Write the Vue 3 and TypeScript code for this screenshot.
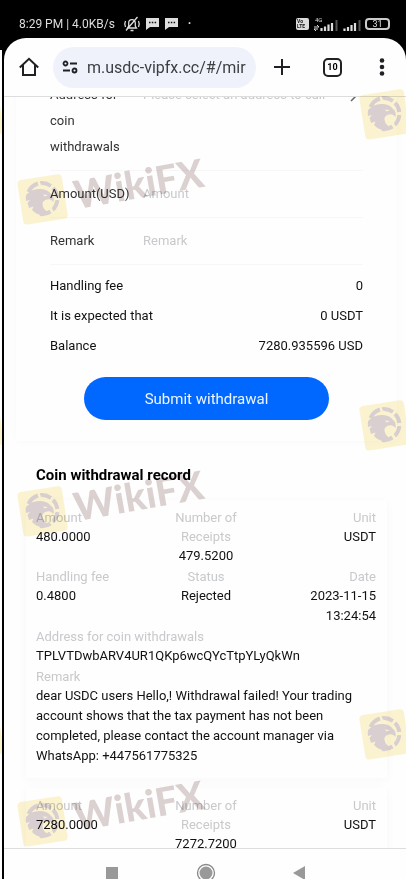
<script setup lang="ts">
import { ref } from 'vue'

interface Entry {
  amount: string
  receipts: string
  unit: string
  fee?: string
  status?: string
  date?: string
  address?: string
  remark?: string
}

const amount = ref('')
const remark = ref('')
const address = ref('')

const summary = [
  { label: 'Handling fee', value: '0' },
  { label: 'It is expected that', value: '0 USDT' },
  { label: 'Balance', value: '7280.935596 USD' },
]

const records: Entry[] = [
  {
    amount: '480.0000',
    receipts: '479.5200',
    unit: 'USDT',
    fee: '0.4800',
    status: 'Rejected',
    date: '2023-11-15 13:24:54',
    address: 'TPLVTDwbARV4UR1QKp6wcQYcTtpYLyQkWn',
    remark:
      'dear USDC users Hello,! Withdrawal failed! Your trading account shows that the tax payment has not been completed, please contact the account manager via WhatsApp: +447561775325',
  },
  { amount: '7280.0000', receipts: '7272.7200', unit: 'USDT' },
]

const wideMarks = ['first', 'second', 'third']
const edgeMarks = ['upper', 'middle', 'lower']
</script>

<template>
  <div class="device">
    <svg class="defs" width="0" height="0" aria-hidden="true">
      <symbol id="eagle" viewBox="0 0 52 52">
        <rect x="4" y="4" width="45" height="45" rx="4" fill="#f8e48c" transform="rotate(-9 26 26)" />
        <g fill="none" stroke="#a28a8c" stroke-width="4">
          <path d="M12.500 19A15.500 15.500 0 0 1 22 10.500" />
          <path d="M24 10.200A15.500 15.500 0 0 1 35 13" />
          <path d="M37 14.800A15.500 15.500 0 0 1 41.300 24" />
          <path d="M41.300 27A15.500 15.500 0 0 1 36.500 37" />
          <path d="M34.500 38.500A15.500 15.500 0 0 1 24 41" />
        </g>
        <path
          d="M10 22Q16 15 25 16Q32 16.500 35 21Q38.500 23 37.500 29Q35 25.500 31 26.500Q27.500 27 26.500 30Q26 35 31 38.500L27 42.500Q20 41.500 16 37L17.500 33.500L13 35L11.500 30L14 27L10 28Q9.500 25 10 22Z"
          fill="#a28a8c"
        />
        <path d="M27 21.500L32 22L28.500 23.500Z" fill="#f8e48c" />
        <path d="M22 8L26 13M36 12L34 18M43 25L39 27M37 39L35 34" stroke="#f8e48c" stroke-width="1" />
      </symbol>
    </svg>

    <div class="edge"></div>
    <div class="screen">
      <header class="status">
        <span>8:29 PM | 4.0KB/s</span>
        <svg class="bell" viewBox="0 0 18 16" width="18" height="16" aria-hidden="true">
          <g fill="none" stroke="#ddd" stroke-width="1.3">
            <path d="M4.500 12H13.500L12.300 10V7A3.300 3.300 0 0 0 5.700 7V10ZM3 14.500L14.500 1M7.500 14.500H10.500" />
            <path d="M2.500 5Q1 8 2.500 11M15.500 5Q17 8 15.500 11" />
          </g>
        </svg>
        <svg v-for="n in 2" :key="n" class="chat" viewBox="0 0 13 12" width="13" height="12" aria-hidden="true">
          <path d="M0 0H13V9H4L0 12Z" fill="#ddd" />
          <path d="M3 4.500H4.500M5.800 4.500H7.300M8.600 4.500H10.100" stroke="#111" stroke-width="1.500" />
        </svg>
        <span class="dot">·</span>
        <span class="status-right">
          <span class="volte"><b>Vo</b><b>LTE</b></span>
          <svg viewBox="0 0 26 16" width="26" height="16" aria-hidden="true">
            <text x="2" y="6" class="net">4G</text>
            <path d="M1 11H6M4 9L6 11M1 13H5M3 15L1 13" stroke="#ddd" stroke-width="1" fill="none" />
            <path d="M8.500 15V12M12 15V10.500M15.500 15V8.500M19 15V7" stroke="#ddd" stroke-width="2.200" />
            <path d="M23.500 15V4" stroke="#555" stroke-width="2" />
          </svg>
          <svg viewBox="0 0 18 16" width="18" height="16" aria-hidden="true">
            <path d="M1.500 15V12.500M5 15V11M8.500 15V9M12 15V7" stroke="#ddd" stroke-width="2.200" />
            <path d="M16.500 15V4" stroke="#555" stroke-width="2" />
          </svg>
          <span class="battery">31</span>
        </span>
      </header>

      <div class="sheet">
        <nav class="toolbar">
          <button type="button" class="icon" aria-label="Home">
            <svg viewBox="0 0 20 20" width="20" height="20">
              <path d="M0.800 10.500L10 1.800L19.200 10.500M4 8V18H16V8" fill="none" stroke="#202124" stroke-width="2" />
            </svg>
          </button>
          <a class="url" href="#">
            <svg viewBox="0 0 16 14" width="16" height="14" aria-hidden="true">
              <g fill="none" stroke="#202124" stroke-width="1.800">
                <circle cx="3.500" cy="3.500" r="2" />
                <path d="M8 3.500H15M1 10.500H8" />
                <circle cx="12.500" cy="10.500" r="2" />
              </g>
            </svg>
            <span class="url-text">m.usdc-vipfx.cc/#/mir</span>
          </a>
          <button type="button" class="icon action" aria-label="New tab">
            <svg viewBox="0 0 18 18" width="18" height="18">
              <path d="M9 1V17M1 9H17" stroke="#202124" stroke-width="2" />
            </svg>
          </button>
          <button type="button" class="icon action" aria-label="Tabs"><span class="tabs">10</span></button>
          <button type="button" class="icon" aria-label="Menu">
            <svg viewBox="0 0 6 18" width="6" height="18">
              <g fill="#202124">
                <circle cx="3" cy="2.500" r="2.300" />
                <circle cx="3" cy="9" r="2.300" />
                <circle cx="3" cy="15.500" r="2.300" />
              </g>
            </svg>
          </button>
        </nav>

        <main class="viewport">
          <div class="scrolled">
            <form class="form" @submit.prevent>
              <div class="field">
                <label for="address">Address for coin withdrawals</label>
                <input id="address" v-model="address" readonly placeholder="Please select an address to call" />
                <svg class="chevron" viewBox="0 0 7 12" width="7" height="12" aria-hidden="true">
                  <path d="M1 1L6 6L1 11" fill="none" stroke="#666" stroke-width="1.500" />
                </svg>
              </div>
              <div class="field">
                <label for="amount">Amount(USD)</label>
                <input id="amount" v-model="amount" placeholder="Amount" />
              </div>
              <div class="field">
                <label for="remark">Remark</label>
                <input id="remark" v-model="remark" placeholder="Remark" />
              </div>
              <dl class="summary">
                <div v-for="s in summary" :key="s.label">
                  <dt>{{ s.label }}</dt>
                  <dd>{{ s.value }}</dd>
                </div>
              </dl>
              <button class="submit" type="submit">Submit withdrawal</button>
            </form>

            <section class="history">
              <h2>Coin withdrawal record</h2>
              <dl v-for="r in records" :key="r.amount" class="record">
                <div><dt>Amount</dt><dd>{{ r.amount }}</dd></div>
                <div class="center"><dt>Number of Receipts</dt><dd>{{ r.receipts }}</dd></div>
                <div class="end"><dt>Unit</dt><dd>{{ r.unit }}</dd></div>
                <template v-if="r.status">
                  <div><dt>Handling fee</dt><dd>{{ r.fee }}</dd></div>
                  <div class="center"><dt>Status</dt><dd>{{ r.status }}</dd></div>
                  <div class="end"><dt>Date</dt><dd>{{ r.date }}</dd></div>
                  <div class="full"><dt>Address for coin withdrawals</dt><dd>{{ r.address }}</dd></div>
                  <div class="full"><dt>Remark</dt><dd>{{ r.remark }}</dd></div>
                </template>
              </dl>
            </section>
          </div>
        </main>

        <footer class="system">
          <button type="button" aria-label="Recent apps">
            <svg viewBox="0 0 20 20" width="20" height="20"><rect x="4" y="4" width="12" height="12" fill="#999" /></svg>
          </button>
          <button type="button" aria-label="Home screen">
            <svg viewBox="0 0 20 20" width="20" height="20">
              <circle cx="10" cy="10" r="8.500" fill="none" stroke="#888" stroke-width="1.300" />
              <circle cx="10" cy="10" r="6.500" fill="#999" />
            </svg>
          </button>
          <button type="button" aria-label="Back">
            <svg viewBox="0 0 20 20" width="20" height="20"><path d="M4 10L16 3V17Z" fill="#999" /></svg>
          </button>
        </footer>
      </div>
    </div>

    <div v-for="m in wideMarks" :key="m" class="mark wide" :class="m" aria-hidden="true">
      <svg width="52" height="52"><use href="#eagle" /></svg>
      <span>WikiFX</span>
    </div>
    <template v-for="m in edgeMarks" :key="m">
      <div class="mark" :class="m" aria-hidden="true">
        <svg width="52" height="52"><use href="#eagle" /></svg>
      </div>
      <div class="mark outer" :class="m" aria-hidden="true">
        <svg width="52" height="52"><use href="#eagle" /></svg>
      </div>
    </template>
  </div>
</template>

<style>
body {
  background: #000;
}
</style>

<style scoped>
* {
  box-sizing: border-box;
}
.device {
  position: relative;
  display: flex;
  height: 100vh;
  overflow: hidden;
  background: #000;
  font-family: Roboto, sans-serif;
  font-size: 13px;
  color: #111;
}
.defs {
  position: absolute;
}
.edge {
  width: 2px;
  margin: 50px 2px 0 0;
  background: #fdfdfb;
}
.screen {
  flex: 1;
  min-width: 0;
  display: flex;
  flex-direction: column;
}
.status {
  display: flex;
  align-items: center;
  height: 38px;
  padding: 10px 16px 0 15px;
  font-size: 12px;
  color: #ddd;
}
.bell {
  margin: 0 5px 0 8px;
}
.chat {
  margin-right: 6px;
}
.dot {
  margin-left: 4px;
  font-weight: 700;
}
.status-right {
  display: flex;
  align-items: center;
  gap: 4px;
  margin-left: auto;
}
.volte {
  display: flex;
  flex-direction: column;
  width: 13px;
  padding: 1px;
  border-radius: 2px;
  background: #ddd;
  color: #111;
  font-size: 5px;
  line-height: 5px;
}
.net {
  fill: #ddd;
  font-size: 6px;
}
.battery {
  width: 25px;
  border: 2px solid #ccc;
  border-radius: 4px;
  font-size: 9px;
  line-height: 8px;
  text-align: center;
}
.sheet {
  flex: 1;
  min-height: 0;
  display: flex;
  flex-direction: column;
  border-radius: 22px 22px 0 0;
  background: #fefefe;
  overflow: hidden;
}
button {
  border: 0;
  padding: 0;
  background: none;
  font: inherit;
  cursor: pointer;
}
.toolbar {
  display: flex;
  align-items: center;
  height: 59px;
  padding-left: 1px;
  border-bottom: 1px solid #ddd;
}
.icon {
  display: grid;
  place-items: center;
  width: 48px;
  height: 48px;
}
.action {
  width: 51px;
}
.url {
  flex: 1;
  min-width: 0;
  display: flex;
  align-items: center;
  gap: 9px;
  height: 41px;
  padding: 0 6px 0 9px;
  border-radius: 21px;
  background: #eff2fb;
  color: #3c4043;
  text-decoration: none;
}
.url svg {
  flex: none;
}
.url-text {
  overflow: hidden;
  white-space: nowrap;
  font-size: 16px;
}
.tabs {
  width: 19px;
  height: 19px;
  border: 2px solid #202124;
  border-radius: 5px;
  font-size: 9px;
  font-weight: 700;
  line-height: 15px;
}
.viewport {
  flex: 1;
  min-height: 0;
  overflow: hidden;
}
.scrolled {
  margin-top: -25px;
  padding: 0 9px 0 12px;
}
.form {
  padding: 0 34px 21px;
  box-shadow: 0 0 8px #f9f9f9;
}
.field {
  display: flex;
  align-items: flex-start;
  padding: 10px 0;
  border-bottom: 1px solid #f7f7f7;
  line-height: 26px;
  color: #333;
}
.field label {
  width: 93px;
  padding-right: 12px;
}
.field input {
  flex: 1;
  min-width: 0;
  height: 26px;
  padding: 0;
  border: 0;
  outline: 0;
  background: none;
  font: inherit;
}
.field input::placeholder {
  color: #c8c9cc;
  opacity: 1;
}
.chevron {
  margin: 8px 6px 0 0;
}
dl,
dd {
  margin: 0;
}
.summary {
  padding: 6px 0 16px;
  line-height: 30px;
}
.summary div {
  display: flex;
  justify-content: space-between;
}
.submit {
  display: block;
  width: 78%;
  height: 43px;
  margin: 0 auto;
  border-radius: 22px;
  background: #0068fe;
  color: #eef5ff;
  font-size: 15px;
}
.history {
  padding: 22px 10px 0;
}
h2 {
  margin: 0 0 13px 10px;
  font-size: 15px;
  line-height: 24px;
  font-weight: 700;
  color: #000;
}
.record {
  display: grid;
  grid-template-columns: repeat(3, 1fr);
  row-gap: 1px;
  padding: 8px 11px 12px 10px;
  margin-bottom: 10px;
  box-shadow: 0 2px 10px #f8f8f8;
}
.center {
  text-align: center;
}
.end {
  text-align: right;
}
.full {
  grid-column: 1 / -1;
}
.record dt {
  line-height: 19px;
  color: #c8c9cc;
}
.record dd {
  line-height: 20px;
}
.system {
  display: flex;
  justify-content: space-between;
  height: 31px;
  padding: 14px 97px 0 98px;
  border-top: 1px solid #ddd;
}
.system button {
  width: 20px;
  height: 20px;
}
.mark {
  position: absolute;
  right: -4px;
  display: flex;
  opacity: 0.4;
  mix-blend-mode: multiply;
  pointer-events: none;
}
.wide {
  left: 16px;
  right: auto;
}
.outer {
  left: -48px;
  right: auto;
}
.mark span {
  position: absolute;
  left: 57px;
  top: -14px;
  color: #a58f8b;
  font: 900 39px/48px Lato, sans-serif;
  transform: rotate(-10deg);
}
.first {
  top: 173px;
}
.second {
  top: 485px;
}
.third {
  top: 795px;
}
.upper {
  top: 88px;
}
.middle {
  top: 399px;
}
.lower {
  top: 708px;
}
</style>
